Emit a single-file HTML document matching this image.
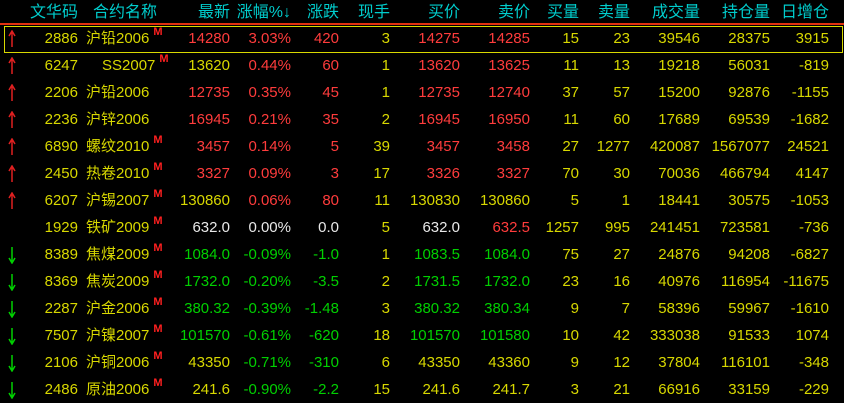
<!DOCTYPE html>
<html><head><meta charset="utf-8"><style>
body{margin:0;width:844px;height:403px;background:#000;overflow:hidden;position:relative;font-family:"Liberation Sans","Noto Sans CJK SC",sans-serif;font-size:15px;}
.r{position:absolute;left:0;width:844px;height:27px;line-height:27px;}
.r span{position:absolute;white-space:nowrap;}
.r svg{position:absolute;left:8px;top:5px}
.c1{right:766px}.nm{left:86px}.c3{right:614px}.c4{right:553px}.c5{right:505px}.c6{right:454px}.c7{right:384px}.c8{right:314px}.c9{right:265px}.c10{right:214px}.c11{right:144px}.c12{right:74px}.c13{right:15px}
.R{color:#ff3c3c}.G{color:#00d000}.Y{color:#d8d800}.W{color:#e8e8e8}
sup{color:#ff2020;font-size:11px;font-weight:bold;vertical-align:top;line-height:14px;margin-left:4px}
.hdr span{color:#00cccc;font-size:16px}
#line{position:absolute;left:0;top:23px;width:844px;height:2px;background:#e03010}
#sel{position:absolute;left:4px;top:26px;width:837px;height:25px;border:1px solid #d8d800}
</style></head><body>
<svg width="0" height="0" style="position:absolute"><defs>
<symbol id="up" viewBox="0 0 8 18"><path d="M4 1V17M1 6L4 1L7 6" stroke="#e02020" stroke-width="1.5" fill="none"/></symbol>
<symbol id="dn" viewBox="0 0 8 18"><path d="M4 1V17M1 12L4 17L7 12" stroke="#00d000" stroke-width="1.5" fill="none"/></symbol>
</defs></svg>
<div class="r hdr" style="top:-1px"><span class="c1">文华码</span><span style="left:93px">合约名称</span><span class="c3">最新</span><span class="c4">涨幅%↓</span><span class="c5">涨跌</span><span class="c6">现手</span><span class="c7">买价</span><span class="c8">卖价</span><span class="c9">买量</span><span class="c10">卖量</span><span class="c11">成交量</span><span class="c12">持仓量</span><span class="c13">日增仓</span></div>
<div id="line"></div>
<div id="sel"></div>

<div class="r Y" style="top:25px"><svg width="8" height="18"><use href="#up"/></svg><span class="c1">2886</span><span class="nm">沪铅2006<sup>M</sup></span><span class="c3 R">14280</span><span class="c4 R">3.03%</span><span class="c5 R">420</span><span class="c6">3</span><span class="c7 R">14275</span><span class="c8 R">14285</span><span class="c9">15</span><span class="c10">23</span><span class="c11">39546</span><span class="c12">28375</span><span class="c13">3915</span></div>
<div class="r Y" style="top:52px"><svg width="8" height="18"><use href="#up"/></svg><span class="c1">6247</span><span style="left:102px">SS2007<sup>M</sup></span><span class="c3">13620</span><span class="c4 R">0.44%</span><span class="c5 R">60</span><span class="c6">1</span><span class="c7 R">13620</span><span class="c8 R">13625</span><span class="c9">11</span><span class="c10">13</span><span class="c11">19218</span><span class="c12">56031</span><span class="c13">-819</span></div>
<div class="r Y" style="top:79px"><svg width="8" height="18"><use href="#up"/></svg><span class="c1">2206</span><span class="nm">沪铅2006</span><span class="c3 R">12735</span><span class="c4 R">0.35%</span><span class="c5 R">45</span><span class="c6">1</span><span class="c7 R">12735</span><span class="c8 R">12740</span><span class="c9">37</span><span class="c10">57</span><span class="c11">15200</span><span class="c12">92876</span><span class="c13">-1155</span></div>
<div class="r Y" style="top:106px"><svg width="8" height="18"><use href="#up"/></svg><span class="c1">2236</span><span class="nm">沪锌2006</span><span class="c3 R">16945</span><span class="c4 R">0.21%</span><span class="c5 R">35</span><span class="c6">2</span><span class="c7 R">16945</span><span class="c8 R">16950</span><span class="c9">11</span><span class="c10">60</span><span class="c11">17689</span><span class="c12">69539</span><span class="c13">-1682</span></div>
<div class="r Y" style="top:133px"><svg width="8" height="18"><use href="#up"/></svg><span class="c1">6890</span><span class="nm">螺纹2010<sup>M</sup></span><span class="c3 R">3457</span><span class="c4 R">0.14%</span><span class="c5 R">5</span><span class="c6">39</span><span class="c7 R">3457</span><span class="c8 R">3458</span><span class="c9">27</span><span class="c10">1277</span><span class="c11">420087</span><span class="c12">1567077</span><span class="c13">24521</span></div>
<div class="r Y" style="top:160px"><svg width="8" height="18"><use href="#up"/></svg><span class="c1">2450</span><span class="nm">热卷2010<sup>M</sup></span><span class="c3 R">3327</span><span class="c4 R">0.09%</span><span class="c5 R">3</span><span class="c6">17</span><span class="c7 R">3326</span><span class="c8 R">3327</span><span class="c9">70</span><span class="c10">30</span><span class="c11">70036</span><span class="c12">466794</span><span class="c13">4147</span></div>
<div class="r Y" style="top:187px"><svg width="8" height="18"><use href="#up"/></svg><span class="c1">6207</span><span class="nm">沪锡2007<sup>M</sup></span><span class="c3">130860</span><span class="c4 R">0.06%</span><span class="c5 R">80</span><span class="c6">11</span><span class="c7">130830</span><span class="c8">130860</span><span class="c9">5</span><span class="c10">1</span><span class="c11">18441</span><span class="c12">30575</span><span class="c13">-1053</span></div>
<div class="r Y" style="top:214px"><span class="c1">1929</span><span class="nm">铁矿2009<sup>M</sup></span><span class="c3 W">632.0</span><span class="c4 W">0.00%</span><span class="c5 W">0.0</span><span class="c6">5</span><span class="c7 W">632.0</span><span class="c8 R">632.5</span><span class="c9">1257</span><span class="c10">995</span><span class="c11">241451</span><span class="c12">723581</span><span class="c13">-736</span></div>
<div class="r Y" style="top:241px"><svg width="8" height="18"><use href="#dn"/></svg><span class="c1">8389</span><span class="nm">焦煤2009<sup>M</sup></span><span class="c3 G">1084.0</span><span class="c4 G">-0.09%</span><span class="c5 G">-1.0</span><span class="c6">1</span><span class="c7 G">1083.5</span><span class="c8 G">1084.0</span><span class="c9">75</span><span class="c10">27</span><span class="c11">24876</span><span class="c12">94208</span><span class="c13">-6827</span></div>
<div class="r Y" style="top:268px"><svg width="8" height="18"><use href="#dn"/></svg><span class="c1">8369</span><span class="nm">焦炭2009<sup>M</sup></span><span class="c3 G">1732.0</span><span class="c4 G">-0.20%</span><span class="c5 G">-3.5</span><span class="c6">2</span><span class="c7 G">1731.5</span><span class="c8 G">1732.0</span><span class="c9">23</span><span class="c10">16</span><span class="c11">40976</span><span class="c12">116954</span><span class="c13">-11675</span></div>
<div class="r Y" style="top:295px"><svg width="8" height="18"><use href="#dn"/></svg><span class="c1">2287</span><span class="nm">沪金2006<sup>M</sup></span><span class="c3 G">380.32</span><span class="c4 G">-0.39%</span><span class="c5 G">-1.48</span><span class="c6">3</span><span class="c7 G">380.32</span><span class="c8 G">380.34</span><span class="c9">9</span><span class="c10">7</span><span class="c11">58396</span><span class="c12">59967</span><span class="c13">-1610</span></div>
<div class="r Y" style="top:322px"><svg width="8" height="18"><use href="#dn"/></svg><span class="c1">7507</span><span class="nm">沪镍2007<sup>M</sup></span><span class="c3 G">101570</span><span class="c4 G">-0.61%</span><span class="c5 G">-620</span><span class="c6">18</span><span class="c7 G">101570</span><span class="c8 G">101580</span><span class="c9">10</span><span class="c10">42</span><span class="c11">333038</span><span class="c12">91533</span><span class="c13">1074</span></div>
<div class="r Y" style="top:349px"><svg width="8" height="18"><use href="#dn"/></svg><span class="c1">2106</span><span class="nm">沪铜2006<sup>M</sup></span><span class="c3">43350</span><span class="c4 G">-0.71%</span><span class="c5 G">-310</span><span class="c6">6</span><span class="c7">43350</span><span class="c8">43360</span><span class="c9">9</span><span class="c10">12</span><span class="c11">37804</span><span class="c12">116101</span><span class="c13">-348</span></div>
<div class="r Y" style="top:376px"><svg width="8" height="18"><use href="#dn"/></svg><span class="c1">2486</span><span class="nm">原油2006<sup>M</sup></span><span class="c3">241.6</span><span class="c4 G">-0.90%</span><span class="c5 G">-2.2</span><span class="c6">15</span><span class="c7">241.6</span><span class="c8">241.7</span><span class="c9">3</span><span class="c10">21</span><span class="c11">66916</span><span class="c12">33159</span><span class="c13">-229</span></div>
</body></html>
